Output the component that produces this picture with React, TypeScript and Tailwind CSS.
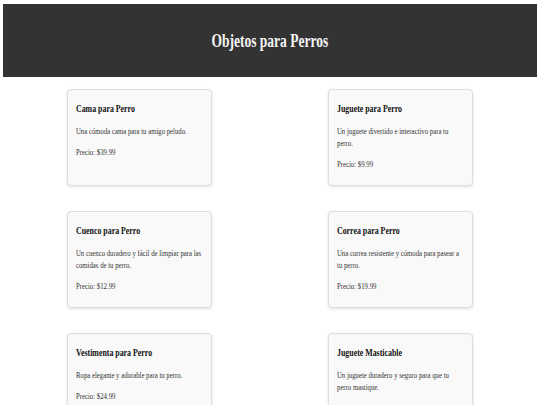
import React from "react";

type Item = { name: string; desc: string; price: string };

const items: Item[] = [
  { name: "Cama para Perro", desc: "Una cómoda cama para tu amigo peludo.", price: "$39.99" },
  { name: "Juguete para Perro", desc: "Un juguete divertido e interactivo para tu perro.", price: "$9.99" },
  { name: "Cuenco para Perro", desc: "Un cuenco duradero y fácil de limpiar para las comidas de tu perro.", price: "$12.99" },
  { name: "Correa para Perro", desc: "Una correa resistente y cómoda para pasear a tu perro.", price: "$19.99" },
  { name: "Vestimenta para Perro", desc: "Ropa elegante y adorable para tu perro.", price: "$24.99" },
  { name: "Juguete Masticable", desc: "Un juguete duradero y seguro para que tu perro mastique.", price: "$7.99" },
];

function Card({ item }: { item: Item }) {
  return (
    <div className="w-[145px] h-[97px] shrink-0 rounded-[4px] border border-[#dedede] bg-[#f9f9f9] px-[8px] pt-[12px] shadow-[0_1px_3px_rgba(0,0,0,0.12)]">
      <div className="w-[170px] origin-top-left scale-x-75">
        <h3 className="text-[10.5px] leading-[13px] font-bold text-[#111] mb-[10px]">{item.name}</h3>
        <p className="text-[9px] leading-[12px] text-[#333] mb-[9px]">{item.desc}</p>
        <p className="text-[9px] leading-[12px] text-[#333]">Precio: {item.price}</p>
      </div>
    </div>
  );
}

export default function App() {
  return (
    <div
      className="h-[405px] overflow-hidden bg-white px-[3px] pt-[4px]"
      style={{ fontFamily: '"Liberation Serif", "Times New Roman", serif' }}
    >
      <header className="flex h-[73px] items-center justify-center bg-[#333]">
        <h1 className="inline-block scale-x-75 text-[18px] leading-[22px] font-bold text-[#f5f5f5]">
          Objetos para Perros
        </h1>
      </header>
      <main className="flex flex-wrap justify-between gap-y-[25px] px-[64px] pt-[12px]">
        {items.map((it) => (
          <Card key={it.name} item={it} />
        ))}
      </main>
    </div>
  );
}
